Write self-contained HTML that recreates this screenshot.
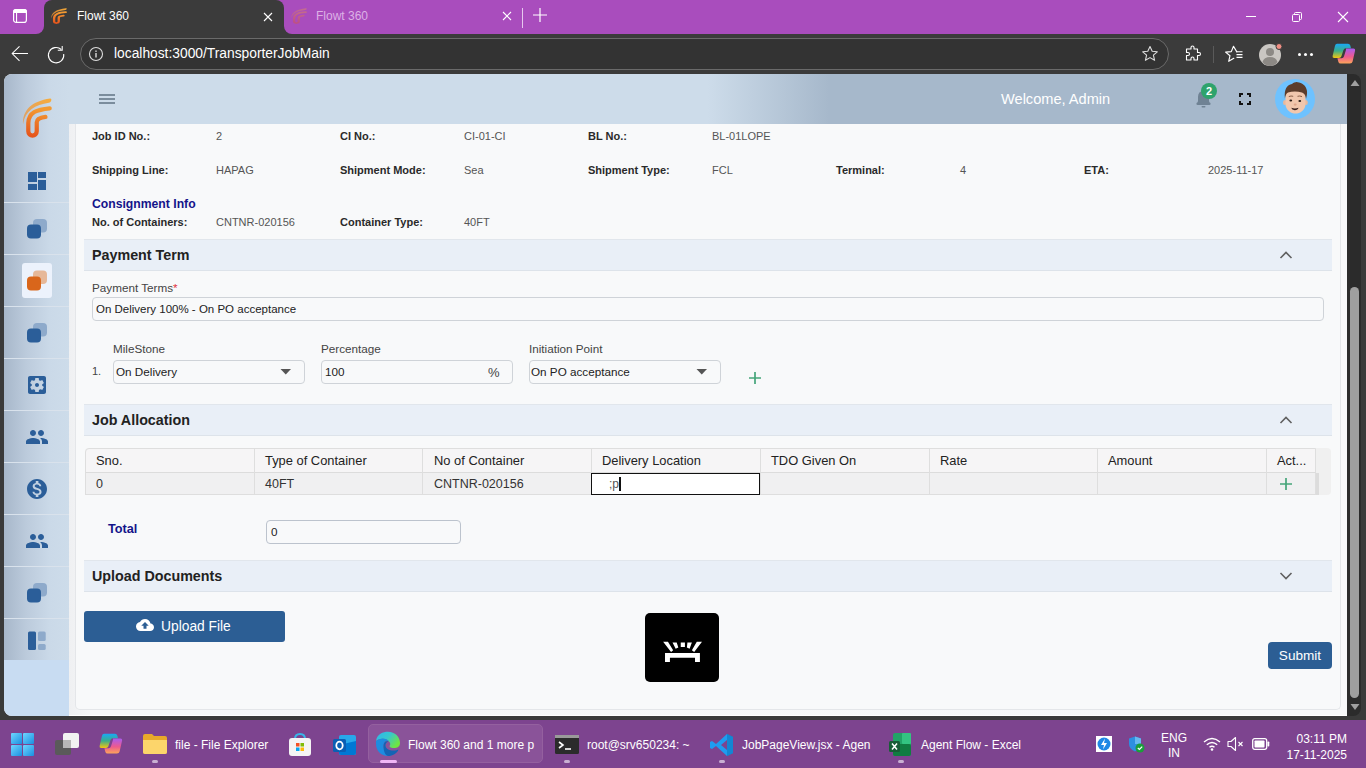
<!DOCTYPE html>
<html><head><meta charset="utf-8">
<style>
*{box-sizing:border-box;margin:0;padding:0}
html,body{width:1366px;height:768px;overflow:hidden;background:#3a3a3a;font-family:"Liberation Sans",sans-serif;position:relative}
.a{position:absolute}
#tabbar{left:0;top:0;width:1366px;height:34px;background:#a94dbd}
#nav{left:0;top:34px;width:1366px;height:40px;background:#3b3b3b}
#web{left:4px;top:74px;width:1343px;height:642px;background:#f8f9fa;border-radius:8px 0 0 8px;overflow:hidden}
#side{left:0;top:0;width:65px;height:586px;background:linear-gradient(90deg,#a7b7ca 0%,#bccbdc 35%,#cad9e8 70%,#cddcea 100%)}
#hdr{left:65px;top:0;width:1278px;height:50px;background:linear-gradient(90deg,#cddcea 0%,#cddcea 50%,#a6b8cb 59.5%,#a6b8cb 100%)}
#main{left:65px;top:50px;width:1278px;height:592px;background:linear-gradient(90deg,#eff0f2 0px,#f6f7f8 22px,#f7f8f9 100%);border-bottom:1px solid #fff}
.sep{left:4px;width:65px;height:1px;background:#d9e2ec}
#sb{left:1347px;top:74px;width:14px;height:642px;background:#2b2b2b;border-radius:0 8px 8px 0}
#task{left:0;top:720px;width:1366px;height:48px;background:#7d448f}
.tbt{font-size:12px;color:#fff;line-height:16px}
.lbl{font-size:11px;font-weight:bold;color:#2a2a2a;line-height:14px}
.val{font-size:11px;color:#555;line-height:14px}
.sech{left:84px;width:1248px;height:32px;background:#e9eff7;border-top:1px solid #e1e6ec;border-bottom:1px solid #dde3ea}
.sech span{position:absolute;left:8px;top:7px;font-size:14.3px;font-weight:bold;color:#222;line-height:16px}
.flbl{font-size:11.7px;color:#444;line-height:14px}
.inp{background:#f8f9fa;border:1px solid #cfd3d8;border-radius:4px}
.inp span{position:absolute;top:4px;font-size:11.7px;line-height:14px;color:#222;white-space:nowrap}
.vl{top:449px;width:1px;height:45px;background:#dedede}
.th{top:453px;font-size:12.9px;color:#222;line-height:15px}
.td{top:477px;font-size:12.5px;color:#333;line-height:15px}
</style></head><body>
<!-- TAB BAR -->
<div id="tabbar" class="a">
  <svg class="a" style="left:12px;top:8px" width="16" height="16" viewBox="0 0 16 16"><rect x="1.6" y="1.6" width="12.8" height="12.8" rx="2.5" fill="none" stroke="#fff" stroke-width="1.2"/><path d="M1 5 V3.5 Q1 1 3.5 1 H12.5 Q15 1 15 3.5 V5 Z" fill="#fff"/><rect x="4" y="4.5" width="1.1" height="10" fill="#fff"/></svg>
  <div class="a" style="left:44px;top:0;width:240px;height:34px;background:#3b3b3b;border-radius:8px 8px 0 0"></div>
  <div class="a" style="left:36px;top:26px;width:8px;height:8px;background:#3b3b3b"></div>
  <div class="a" style="left:36px;top:18px;width:8px;height:16px;background:#a94dbd;border-bottom-right-radius:8px"></div>
  <div class="a" style="left:284px;top:26px;width:8px;height:8px;background:#3b3b3b"></div>
  <div class="a" style="left:284px;top:18px;width:8px;height:16px;background:#a94dbd;border-bottom-left-radius:8px"></div>
  <svg class="a" style="left:51px;top:8px" width="16" height="16" viewBox="90 150 345 475" preserveAspectRatio="none"><defs><linearGradient id="fg11" x1="0" y1="1" x2="1" y2="0"><stop offset="0" stop-color="#f08a28" stop-opacity=".7"/><stop offset="1" stop-color="#f7ac3a"/></linearGradient><linearGradient id="fg21" x1="0.3" y1="0" x2="0.2" y2="1"><stop offset="0" stop-color="#f39a32"/><stop offset="1" stop-color="#e6561c"/></linearGradient></defs><path d="M95 465 C85 300 200 190 415 160 C440 158 432 205 400 210 C240 235 120 300 95 465 Z" fill="url(#fg11)"/><path d="M410 275 C260 290 160 320 157 450 L157 547 C157 580 180 597 207 597 C234 597 257 580 257 547 L257 440 C257 400 300 385 360 377" fill="none" stroke="url(#fg21)" stroke-width="50" stroke-linecap="round"/></svg>
  <div class="a" style="left:77px;top:8px;font-size:12px;color:#fff;line-height:16px">Flowt 360</div>
  <svg class="a" style="left:262px;top:11px" width="12" height="12" viewBox="0 0 12 12"><path d="M2 2 L10 10 M10 2 L2 10" stroke="#fff" stroke-width="1.1"/></svg>
  <svg class="a" style="left:291px;top:8px;opacity:.35" width="16" height="16" viewBox="90 150 345 475" preserveAspectRatio="none"><defs><linearGradient id="fg12" x1="0" y1="1" x2="1" y2="0"><stop offset="0" stop-color="#f08a28" stop-opacity=".7"/><stop offset="1" stop-color="#f7ac3a"/></linearGradient><linearGradient id="fg22" x1="0.3" y1="0" x2="0.2" y2="1"><stop offset="0" stop-color="#f39a32"/><stop offset="1" stop-color="#e6561c"/></linearGradient></defs><path d="M95 465 C85 300 200 190 415 160 C440 158 432 205 400 210 C240 235 120 300 95 465 Z" fill="url(#fg12)"/><path d="M410 275 C260 290 160 320 157 450 L157 547 C157 580 180 597 207 597 C234 597 257 580 257 547 L257 440 C257 400 300 385 360 377" fill="none" stroke="url(#fg22)" stroke-width="50" stroke-linecap="round"/></svg>
  <div class="a" style="left:316px;top:8px;font-size:12px;color:#dcb0e6;line-height:16px">Flowt 360</div>
  <svg class="a" style="left:501px;top:10px" width="12" height="12" viewBox="0 0 12 12"><path d="M2 2 L10 10 M10 2 L2 10" stroke="#fff" stroke-width="1.1"/></svg>
  <div class="a" style="left:522px;top:8px;width:1px;height:20px;background:#e6c8ee"></div>
  <svg class="a" style="left:532px;top:7px" width="16" height="16" viewBox="0 0 16 16"><path d="M8 1 V15 M1 8 H15" stroke="#fff" stroke-width="1.2"/></svg>
  <svg class="a" style="left:1244px;top:9px" width="14" height="14" viewBox="0 0 14 14"><path d="M2 7.5 H12" stroke="#fff" stroke-width="1"/></svg>
  <svg class="a" style="left:1290px;top:10px" width="14" height="14" viewBox="0 0 14 14"><rect x="2.5" y="4.5" width="7" height="7" rx="1" fill="none" stroke="#fff" stroke-width="1"/><path d="M4.5 4.5 V3.5 Q4.5 2.5 5.5 2.5 H10.5 Q11.5 2.5 11.5 3.5 V8.5 Q11.5 9.5 10.5 9.5 H9.5" fill="none" stroke="#fff" stroke-width="1"/></svg>
  <svg class="a" style="left:1336px;top:10px" width="14" height="14" viewBox="0 0 14 14"><path d="M2 2 L12 12 M12 2 L2 12" stroke="#fff" stroke-width="1.1"/></svg>
</div>
<!-- NAV BAR -->
<div id="nav" class="a">
  <svg class="a" style="left:10px;top:10px" width="20" height="20" viewBox="0 0 20 20"><path d="M18 9.5 H2.2 M9.5 2.3 L2.2 9.5 L9.5 16.8" fill="none" stroke="#fff" stroke-width="1.05"/></svg>
  <svg class="a" style="left:46px;top:10px" width="20" height="20" viewBox="0 0 20 20"><path d="M15.3 5.5 A7.7 7.7 0 1 0 17.7 10" fill="none" stroke="#fff" stroke-width="1.05"/><path d="M16.2 2 V6.3 H11.8" fill="none" stroke="#fff" stroke-width="1.05"/></svg>
  <div class="a" style="left:80px;top:4px;width:1089px;height:32px;border:1px solid #6a6a6a;border-radius:16px;background:#333"></div>
  <svg class="a" style="left:88px;top:12px" width="16" height="16" viewBox="0 0 16 16"><circle cx="8" cy="8" r="6.5" fill="none" stroke="#ddd" stroke-width="1.1"/><rect x="7.3" y="7" width="1.4" height="4.5" fill="#ddd"/><rect x="7.3" y="4.5" width="1.4" height="1.4" fill="#ddd"/></svg>
  <div class="a" style="left:114px;top:12px;font-size:13.8px;line-height:16px;color:#fff;white-space:nowrap">localhost<span style="color:#fff">:3000/TransporterJobMain</span></div>
  <svg class="a" style="left:1140px;top:10px" width="20" height="20" viewBox="0 0 20 20"><path d="M10 2.5 L12.2 7.3 L17.3 7.8 L13.4 11.2 L14.6 16.3 L10 13.6 L5.4 16.3 L6.6 11.2 L2.7 7.8 L7.8 7.3 Z" fill="none" stroke="#ddd" stroke-width="1.1" stroke-linejoin="round"/></svg>
  <svg class="a" style="left:1183px;top:10px" width="20" height="20" viewBox="0 0 20 20"><path d="M8 3.5 Q8 2 9.5 2 Q11 2 11 3.5 V5 H14.5 V8.5 H16 Q17.5 8.5 17.5 10 Q17.5 11.5 16 11.5 H14.5 V16 H11 V14.5 Q11 13 9.5 13 Q8 13 8 14.5 V16 H3.5 V11.5 H5 Q6.5 11.5 6.5 10 Q6.5 8.5 5 8.5 H3.5 V5 H8 Z" fill="none" stroke="#fff" stroke-width="1.1" stroke-linejoin="round"/></svg>
  <div class="a" style="left:1213px;top:12px;width:1px;height:17px;background:#5a5a5a"></div>
  <svg class="a" style="left:1224px;top:10px" width="22" height="20" viewBox="0 0 22 20"><path d="M12.8 7.9 L9.5 2.3 L7.3 7.6 L1.6 8.1 L6 11.7 L4.7 17.3 L9.8 14.3" fill="none" stroke="#fff" stroke-width="1.15" stroke-linejoin="round" stroke-linecap="round"/><path d="M12.5 7.7 H18.5 M12.5 10.6 H18.5 M12.5 13.3 H18.5" stroke="#fff" stroke-width="1.15"/></svg>
  <svg class="a" style="left:1258px;top:8px" width="26" height="26" viewBox="0 0 26 26"><circle cx="12" cy="13" r="11" fill="#c9c6c2"/><circle cx="12" cy="10" r="4" fill="#8c8985"/><path d="M4.5 20 Q6 15 12 15 Q18 15 19.5 20 Q16.5 24 12 24 Q7.5 24 4.5 20 Z" fill="#8c8985"/><circle cx="21" cy="4.5" r="3" fill="#f08f84" stroke="#3b3b3b" stroke-width="1"/></svg>
  <div class="a" style="left:1298px;top:19px;width:3px;height:3px;border-radius:50%;background:#fff;box-shadow:6px 0 0 #fff,12px 0 0 #fff"></div>
  <svg class="a" style="left:1332px;top:9px" width="24" height="22" viewBox="0 0 24 22"><defs><linearGradient id="cpa" x1="0" y1="0" x2="0" y2="1"><stop offset="0" stop-color="#1aa8f5"/><stop offset=".5" stop-color="#3aae8a"/><stop offset="1" stop-color="#f5c60e"/></linearGradient><linearGradient id="cpb" x1="0" y1="0" x2="0" y2="1"><stop offset="0" stop-color="#a85cf0"/><stop offset=".55" stop-color="#ee5a8e"/><stop offset="1" stop-color="#fca55a"/></linearGradient></defs><path d="M5 0.8 H16 Q17.8 0.8 18.3 2.5 L19 5.2 H14 Q12 5.2 11.4 7.2 L9.4 13.3 Q8.8 15 7 15 H2.2 Q0.2 15 0.6 13 L3 2.8 Q3.5 0.8 5 0.8 Z" fill="url(#cpa)"/><path d="M14 5.5 H21.5 Q23.5 5.5 23.1 7.5 L20.6 18.4 Q20.1 20.5 18 20.5 H8.5 Q6.9 20.5 6.4 19 L5.4 15.2 H9.5 Q11.5 15.2 12 13.3 L13.8 7.5 Q14.3 5.5 14 5.5 Z" fill="url(#cpb)"/></svg>
</div>
<div id="sb" class="a"></div>
<!-- WEB CONTENT -->
<div id="web" class="a">
  <div id="side" class="a"></div>
  <div class="a" style="left:0;top:586px;width:65px;height:56px;background:#c8dcf2"></div>
  <div id="hdr" class="a"></div>
  <div id="main" class="a"></div>
</div>
<!-- sidebar separators -->
<div class="a sep" style="top:202px"></div>
<div class="a sep" style="top:254px"></div>
<div class="a sep" style="top:306px"></div>
<div class="a sep" style="top:358px"></div>
<div class="a sep" style="top:410px"></div>
<div class="a sep" style="top:462px"></div>
<div class="a sep" style="top:514px"></div>
<div class="a sep" style="top:566px"></div>
<div class="a sep" style="top:618px"></div>
<!-- logo -->
<svg class="a" style="left:15px;top:85px" width="110" height="65" viewBox="0 0 1300 768">
  <defs>
    <linearGradient id="lg1" x1="0" y1="1" x2="1" y2="0"><stop offset="0" stop-color="#f08a28" stop-opacity=".6"/><stop offset="1" stop-color="#f7ac3a"/></linearGradient>
    <linearGradient id="lg2" x1="0.3" y1="0" x2="0.2" y2="1"><stop offset="0" stop-color="#f39a32"/><stop offset="1" stop-color="#e6561c"/></linearGradient>
  </defs>
  <path d="M95 465 C85 300 200 190 415 160 C440 158 432 205 400 210 C240 235 120 300 95 465 Z" fill="url(#lg1)"/>
  <path d="M410 275 C260 290 160 320 157 450 L157 547 C157 580 180 597 207 597 C234 597 257 580 257 547 L257 440 C257 400 300 385 360 377" fill="none" stroke="url(#lg2)" stroke-width="50" stroke-linecap="round"/>
</svg>
<!-- hamburger -->
<div class="a" style="left:99px;top:94px;width:16px;height:2px;background:#7b8d9d"></div>
<div class="a" style="left:99px;top:98px;width:16px;height:2px;background:#7b8d9d"></div>
<div class="a" style="left:99px;top:102px;width:16px;height:2px;background:#7b8d9d"></div>
<!-- header right -->
<div class="a" style="left:1001px;top:91px;font-size:14.6px;line-height:17px;color:#fff">Welcome, Admin</div>
<svg class="a" style="left:1194px;top:88px" width="20" height="22" viewBox="0 0 20 22"><path d="M9.5 3 Q15 3 15 9 V13 Q15 14.5 16.5 15 Q17 16.8 15.5 17 H3.5 Q2 16.8 2.5 15 Q4 14.5 4 13 V9 Q4 3 9.5 3 Z" fill="#6f8294"/><rect x="7.5" y="18" width="4" height="1.5" rx=".7" fill="#6f8294"/></svg>
<div class="a" style="left:1201px;top:83px;width:16px;height:16px;border-radius:50%;background:#2ea36c;color:#fff;font-size:11px;font-weight:bold;line-height:16px;text-align:center">2</div>
<svg class="a" style="left:1239px;top:93px" width="12" height="12" viewBox="0 0 12 12"><path d="M1 4 V1 H4 M8 1 H11 V4 M11 8 V11 H8 M4 11 H1 V8" fill="none" stroke="#111" stroke-width="2"/></svg>
<svg class="a" style="left:1275px;top:79px" width="40" height="40" viewBox="0 0 40 40">
  <circle cx="20" cy="20" r="20" fill="#6ec2ff"/>
  <ellipse cx="9.8" cy="23.5" rx="1.8" ry="2.6" fill="#e9b89b"/><ellipse cx="31" cy="23.5" rx="1.8" ry="2.6" fill="#e9b89b"/>
  <path d="M10.5 17 C10.5 12 15 11.5 20.5 11.5 C26 11.5 30.5 12 30.5 17 L30.5 25 C30.5 31 25 34.6 20.5 34.6 C16 34.6 10.5 31 10.5 25 Z" fill="#f1c7ad"/>
  <path d="M9.9 19.5 C9 10 12 6 17 5 C19 3.5 21 2.8 22.5 3.2 C27 4 31 6 32 12 C32.3 15 31.5 18 31 20 C30.5 16 29.5 14.5 27 13.5 C22 12 17 12.2 13 13.5 C11.5 14.5 10.5 16 9.9 19.5 Z" fill="#5c3d2c"/>
  <path d="M13.8 17.6 Q16 16.6 18.2 17.3 M22.5 17.3 Q24.8 16.6 27 17.6" fill="none" stroke="#8a6048" stroke-width="1"/>
  <ellipse cx="15.8" cy="21.6" rx="1.4" ry="1" fill="#2a1c16"/><ellipse cx="24.8" cy="22" rx="1.4" ry="1" fill="#2a1c16"/>
  <ellipse cx="20.2" cy="25.6" rx="1.5" ry="1.1" fill="#dfa58a"/>
  <path d="M16.2 28.8 Q20 30.2 23.5 28.8 Q23 31.2 19.8 31.3 Q16.8 31.1 16.2 28.8 Z" fill="#3a2320"/>
</svg>
<!-- sidebar icons -->
<svg class="a" style="left:25px;top:169px" width="24" height="24" viewBox="0 0 24 24"><path d="M3 13h9V3H3v10zm0 8h9v-6H3v6zm10 0h8V11h-8v10zm0-18v6h8V3h-8z" fill="#2b5e99"/></svg>
<svg class="a" style="left:26px;top:218px" width="22" height="22" viewBox="0 0 22 22"><rect x="7" y="1" width="14" height="13.5" rx="4" fill="#8eaacb"/><rect x="1" y="6.5" width="14" height="14" rx="4" fill="#2b5e99" stroke="#c8d7e7" stroke-width="0"/></svg>
<div class="a" style="left:22px;top:263px;width:30px;height:35px;border-radius:3px;background:#ecf2fc"></div>
<svg class="a" style="left:26px;top:270px" width="22" height="22" viewBox="0 0 22 22"><rect x="7" y="0.5" width="14" height="13.5" rx="4" fill="#e6b899"/><rect x="1" y="6.5" width="14" height="14" rx="4" fill="#d9661b"/></svg>
<svg class="a" style="left:26px;top:322px" width="22" height="22" viewBox="0 0 22 22"><rect x="7" y="1" width="14" height="13.5" rx="4" fill="#8eaacb"/><rect x="1" y="6.5" width="14" height="14" rx="4" fill="#2b5e99"/></svg>
<svg class="a" style="left:25px;top:373px" width="24" height="24" viewBox="0 0 24 24"><path d="M12 10c-1.1 0-2 .9-2 2s.9 2 2 2 2-.9 2-2-.9-2-2-2zm7-7H5c-1.11 0-2 .9-2 2v14c0 1.1.89 2 2 2h14c1.11 0 2-.9 2-2V5c0-1.1-.89-2-2-2zm-1.75 9c0 .23-.02.46-.05.68l1.48 1.16c.13.11.17.3.08.45l-1.4 2.42c-.09.15-.27.21-.43.15l-1.74-.7c-.36.28-.76.51-1.18.69l-.26 1.85c-.03.17-.18.3-.35.3h-2.8c-.17 0-.32-.13-.35-.29l-.26-1.85c-.43-.18-.82-.41-1.18-.69l-1.74.7c-.16.06-.34 0-.43-.15l-1.4-2.42c-.09-.15-.05-.34.08-.45l1.48-1.16c-.03-.23-.05-.46-.05-.69 0-.23.02-.46.05-.68l-1.48-1.16c-.13-.11-.17-.3-.08-.45l1.4-2.42c.09-.15.27-.21.43-.15l1.74.7c.36-.28.76-.51 1.18-.69l.26-1.85c.03-.17.18-.3.35-.3h2.8c.17 0 .32.13.35.29l.26 1.85c.43.18.82.41 1.18.69l1.74-.7c.16-.06.34 0 .43.15l1.4 2.42c.09.15.05.34-.08.45l-1.48 1.16c.03.23.05.46.05.69z" fill="#2b5e99"/></svg>
<svg class="a" style="left:25px;top:425px" width="24" height="24" viewBox="0 0 24 24"><path d="M16 11c1.66 0 2.99-1.34 2.99-3S17.66 5 16 5c-1.66 0-3 1.34-3 3s1.34 3 3 3zm-8 0c1.66 0 2.99-1.34 2.99-3S9.66 5 8 5C6.34 5 5 6.34 5 8s1.34 3 3 3zm0 2c-2.33 0-7 1.17-7 3.5V19h14v-2.5c0-2.330-4.67-3.5-7-3.5zm8 0c-.29 0-.62.02-.97.05 1.16.84 1.97 1.97 1.97 3.450V19h6v-2.5c0-2.330-4.67-3.5-7-3.5z" fill="#2b5e99"/></svg>
<svg class="a" style="left:25px;top:477px" width="24" height="24" viewBox="0 0 24 24"><path d="M12 2C6.48 2 2 6.48 2 12s4.48 10 10 10 10-4.48 10-10S17.52 2 12 2zm1.41 16.09V20h-2.67v-1.93c-1.71-.36-3.16-1.46-3.27-3.4h1.96c.1 1.05.82 1.87 2.65 1.87 1.96 0 2.4-.98 2.4-1.59 0-.83-.44-1.61-2.67-2.14-2.48-.6-4.18-1.62-4.18-3.67 0-1.72 1.39-2.84 3.11-3.21V4h2.67v1.95c1.86.45 2.79 1.86 2.85 3.39H14.3c-.05-1.11-.64-1.87-2.22-1.87-1.5 0-2.4.68-2.4 1.64 0 .84.65 1.39 2.67 1.91 2.02.52 4.18 1.39 4.18 3.91-.01 1.83-1.38 2.83-3.12 3.16z" fill="#2b5e99"/></svg>
<svg class="a" style="left:25px;top:529px" width="24" height="24" viewBox="0 0 24 24"><path d="M16 11c1.66 0 2.99-1.34 2.99-3S17.66 5 16 5c-1.66 0-3 1.34-3 3s1.34 3 3 3zm-8 0c1.66 0 2.99-1.34 2.99-3S9.66 5 8 5C6.34 5 5 6.34 5 8s1.34 3 3 3zm0 2c-2.33 0-7 1.17-7 3.5V19h14v-2.5c0-2.330-4.67-3.5-7-3.5zm8 0c-.29 0-.62.02-.97.05 1.16.84 1.970 1.970 1.970 3.45V19h6v-2.5c0-2.33-4.67-3.5-7-3.5z" fill="#2b5e99"/></svg>
<svg class="a" style="left:26px;top:582px" width="22" height="22" viewBox="0 0 22 22"><rect x="7" y="1" width="14" height="13.5" rx="4" fill="#8eaacb"/><rect x="1" y="6.5" width="14" height="14" rx="4" fill="#2b5e99"/></svg>
<svg class="a" style="left:27px;top:631px" width="20" height="20" viewBox="0 0 20 20"><rect x="1" y="0.5" width="8" height="18.5" rx="1.5" fill="#2b5e99"/><rect x="11" y="0.5" width="7.7" height="9.5" rx="1.5" fill="#8eaacb"/><rect x="11" y="13" width="7.7" height="6" rx="1.5" fill="#8eaacb"/></svg>
<!-- CARD -->
<div class="a" style="left:75px;top:124px;width:1266px;height:586px;background:#f8f9fa;border:1px solid #e4e6e9;border-top:none;border-radius:0 0 5px 5px"></div>
<!-- info rows -->
<div class="a lbl" style="left:92px;top:129px">Job ID No.:</div><div class="a val" style="left:216px;top:129px">2</div>
<div class="a lbl" style="left:340px;top:129px">CI No.:</div><div class="a val" style="left:464px;top:129px">CI-01-CI</div>
<div class="a lbl" style="left:588px;top:129px">BL No.:</div><div class="a val" style="left:712px;top:129px">BL-01LOPE</div>
<div class="a lbl" style="left:92px;top:163px">Shipping Line:</div><div class="a val" style="left:216px;top:163px">HAPAG</div>
<div class="a lbl" style="left:340px;top:163px">Shipment Mode:</div><div class="a val" style="left:464px;top:163px">Sea</div>
<div class="a lbl" style="left:588px;top:163px">Shipment Type:</div><div class="a val" style="left:712px;top:163px">FCL</div>
<div class="a lbl" style="left:836px;top:163px">Terminal:</div><div class="a val" style="left:960px;top:163px">4</div>
<div class="a lbl" style="left:1084px;top:163px">ETA:</div><div class="a val" style="left:1208px;top:163px">2025-11-17</div>
<div class="a" style="left:92px;top:197px;font-size:12.2px;font-weight:bold;color:#14148a;line-height:14px">Consignment Info</div>
<div class="a lbl" style="left:92px;top:215px">No. of Containers:</div><div class="a val" style="left:216px;top:215px">CNTNR-020156</div>
<div class="a lbl" style="left:340px;top:215px">Container Type:</div><div class="a val" style="left:464px;top:215px">40FT</div>
<!-- Payment Term -->
<div class="a sech" style="top:239px"><span>Payment Term</span></div>
<svg class="a" style="left:1279px;top:249px" width="14" height="12" viewBox="0 0 14 12"><path d="M1.5 9 L7 3.5 L12.5 9" fill="none" stroke="#606060" stroke-width="1.6"/></svg>
<div class="a flbl" style="left:92px;top:281px">Payment Terms<span style="color:#e0303a">*</span></div>
<div class="a inp" style="left:92px;top:297px;width:1232px;height:24px"><span style="left:3px;font-size:11.5px">On Delivery 100% - On PO acceptance</span></div>
<div class="a flbl" style="left:92px;top:364px;font-size:11px">1.</div>
<div class="a flbl" style="left:113px;top:342px">MileStone</div>
<div class="a inp" style="left:113px;top:360px;width:192px;height:24px"><span style="left:2px;color:#222">On Delivery</span></div>
<svg class="a" style="left:280px;top:368px" width="12" height="8" viewBox="0 0 12 8"><path d="M0.5 1 H11 L5.75 6.5 Z" fill="#555"/></svg>
<div class="a flbl" style="left:321px;top:342px">Percentage</div>
<div class="a inp" style="left:321px;top:360px;width:192px;height:24px"><span style="left:3px;color:#222">100</span><span style="left:166px;color:#444;font-size:13px;top:5px">%</span></div>
<div class="a flbl" style="left:529px;top:342px">Initiation Point</div>
<div class="a inp" style="left:529px;top:360px;width:192px;height:24px"><span style="left:1px;color:#222">On PO acceptance</span></div>
<svg class="a" style="left:696px;top:368px" width="12" height="8" viewBox="0 0 12 8"><path d="M0.5 1 H11 L5.75 6.5 Z" fill="#555"/></svg>
<svg class="a" style="left:748px;top:371px" width="14" height="14" viewBox="0 0 14 14"><path d="M7 1 V13 M1 7 H13" stroke="#45a57a" stroke-width="1.7"/></svg>
<!-- Job Allocation -->
<div class="a sech" style="top:404px"><span>Job Allocation</span></div>
<svg class="a" style="left:1279px;top:414px" width="14" height="12" viewBox="0 0 14 12"><path d="M1.5 9 L7 3.5 L12.5 9" fill="none" stroke="#606060" stroke-width="1.6"/></svg>
<!-- table -->
<div class="a" style="left:85px;top:448px;width:1246px;height:47px;background:#f0f0f0;border-radius:4px"></div>
<div class="a" style="left:85px;top:448px;width:1231px;height:25px;background:#f6f5f6;border:1px solid #dedede;border-radius:4px 0 0 0"></div>
<div class="a" style="left:85px;top:472px;width:1231px;height:23px;background:#f0f0f1;border:1px solid #dedede;border-top:1px solid #dcdcdc"></div>
<div class="a" style="left:1316px;top:473px;width:3px;height:22px;background:#dcdcdc"></div>
<div class="a vl" style="left:254px"></div>
<div class="a vl" style="left:422px"></div>
<div class="a vl" style="left:591px"></div>
<div class="a vl" style="left:760px"></div>
<div class="a vl" style="left:929px"></div>
<div class="a vl" style="left:1097px"></div>
<div class="a vl" style="left:1266px"></div>
<div class="a th" style="left:96px">Sno.</div>
<div class="a th" style="left:265px">Type of Container</div>
<div class="a th" style="left:434px">No of Container</div>
<div class="a th" style="left:602px">Delivery Location</div>
<div class="a th" style="left:771px">TDO Given On</div>
<div class="a th" style="left:940px">Rate</div>
<div class="a th" style="left:1108px">Amount</div>
<div class="a th" style="left:1277px">Act...</div>
<div class="a td" style="left:96px">0</div>
<div class="a td" style="left:265px">40FT</div>
<div class="a td" style="left:434px">CNTNR-020156</div>
<div class="a" style="left:591px;top:473px;width:169px;height:22px;background:#fff;border:1.5px solid #111"></div>
<div class="a" style="left:609px;top:477px;font-size:12px;line-height:14px;color:#555">;p</div>
<div class="a" style="left:619px;top:477px;width:1.5px;height:14px;background:#111"></div>
<svg class="a" style="left:1279px;top:477px" width="14" height="14" viewBox="0 0 14 14"><path d="M7 1 V13 M1 7 H13" stroke="#45a57a" stroke-width="1.7"/></svg>
<!-- total -->
<div class="a" style="left:108px;top:522px;font-size:12.7px;font-weight:bold;color:#14148a;line-height:15px">Total</div>
<div class="a inp" style="left:266px;top:520px;width:195px;height:24px;border-color:#bcc3cd"><span style="left:4px;top:4px;color:#222">0</span></div>
<!-- Upload Documents -->
<div class="a sech" style="top:560px"><span>Upload Documents</span></div>
<svg class="a" style="left:1279px;top:570px" width="14" height="12" viewBox="0 0 14 12"><path d="M1.5 3 L7 8.5 L12.5 3" fill="none" stroke="#606060" stroke-width="1.6"/></svg>
<div class="a" style="left:84px;top:611px;width:201px;height:31px;background:#2c5e94;border-radius:3px"></div>
<svg class="a" style="left:136px;top:618px" width="18" height="14" viewBox="0 0 24 18"><path d="M19.35 7.04C18.67 3.59 15.64 1 12 1 9.11 1 6.6 2.64 5.35 5.04 2.34 5.36 0 7.91 0 11c0 3.310 2.69 6 6 6h13c2.760 0 5-2.24 5-5 0-2.64-2.05-4.78-4.65-4.96zM14 10v4h-4v-4H7l5-5 5 5h-3z" fill="#fff"/></svg>
<div class="a" style="left:161px;top:619px;font-size:13.8px;line-height:16px;color:#fff">Upload File</div>
<div class="a" style="left:645px;top:613px;width:74px;height:69px;background:#000;border-radius:5px"></div>
<svg class="a" style="left:640px;top:608px" width="84" height="80" viewBox="0 0 806 768"><path d="M240 432 H575 V518 H528 V478 H287 V518 H240 Z" fill="#fff"/><path d="M222 325 H268 L318 405 L298 422 Z M312 330 H352 L368 380 L342 390 Z M391 330 H431 V375 H391 Z M455 330 H498 L476 390 L450 380 Z M545 325 H595 L520 422 L498 405 Z" fill="#fff"/></svg>
<div class="a" style="left:1268px;top:642px;width:64px;height:27px;background:#2c5e94;border-radius:4px;color:#fff;font-size:13.6px;line-height:27px;text-align:center">Submit</div>
<!-- scrollbar -->
<div class="a" style="left:1350px;top:287px;width:9px;height:411px;border-radius:5px;background:#9f9f9f"></div>
<svg class="a" style="left:1350px;top:79px" width="10" height="8" viewBox="0 0 10 8"><path d="M0.5 7 L5 1 L9.5 7 Z" fill="#9f9f9f"/></svg>
<svg class="a" style="left:1350px;top:703px" width="10" height="8" viewBox="0 0 10 8"><path d="M0.5 1 L5 7 L9.5 1 Z" fill="#9f9f9f"/></svg>
<!-- TASKBAR -->
<div id="task" class="a">
  <!-- windows logo -->
  <svg class="a" style="left:11px;top:13px" width="23" height="23" viewBox="0 0 23 23"><defs><linearGradient id="wg" x1="0" y1="0" x2="1" y2="1"><stop offset="0" stop-color="#6fd6ff"/><stop offset="1" stop-color="#1a8fe0"/></linearGradient></defs><rect x="0" y="0" width="11" height="11" rx="1" fill="url(#wg)"/><rect x="12" y="0" width="11" height="11" rx="1" fill="url(#wg)"/><rect x="0" y="12" width="11" height="11" rx="1" fill="url(#wg)"/><rect x="12" y="12" width="11" height="11" rx="1" fill="url(#wg)"/></svg>
  <!-- task view -->
  <svg class="a" style="left:55px;top:13px" width="25" height="23" viewBox="0 0 25 23"><rect x="0" y="7" width="16" height="15" rx="2" fill="#5a5a5a"/><rect x="8" y="0" width="16" height="15" rx="2" fill="#f2f2f2"/><rect x="8" y="7" width="8" height="8" fill="#b8b8b8"/></svg>
  <!-- copilot -->
  <svg class="a" style="left:99px;top:13px" width="24" height="22" viewBox="0 0 24 22"><defs><linearGradient id="tca" x1="0" y1="0" x2="0" y2="1"><stop offset="0" stop-color="#1aa8f5"/><stop offset=".5" stop-color="#3aae8a"/><stop offset="1" stop-color="#f5c60e"/></linearGradient><linearGradient id="tcb" x1="0" y1="0" x2="0" y2="1"><stop offset="0" stop-color="#a85cf0"/><stop offset=".55" stop-color="#ee5a8e"/><stop offset="1" stop-color="#fca55a"/></linearGradient></defs><path d="M5 0.8 H16 Q17.8 0.8 18.3 2.5 L19 5.2 H14 Q12 5.2 11.4 7.2 L9.4 13.3 Q8.8 15 7 15 H2.2 Q0.2 15 0.6 13 L3 2.8 Q3.5 0.8 5 0.8 Z" fill="url(#tca)"/><path d="M14 5.5 H21.5 Q23.5 5.5 23.1 7.5 L20.6 18.4 Q20.1 20.5 18 20.5 H8.5 Q6.9 20.5 6.4 19 L5.4 15.2 H9.5 Q11.5 15.2 12 13.3 L13.8 7.5 Q14.3 5.5 14 5.5 Z" fill="url(#tcb)"/></svg>
  <!-- file explorer -->
  <svg class="a" style="left:143px;top:14px" width="24" height="20" viewBox="0 0 24 20"><path d="M0 2 Q0 0 2 0 H9 L11 2 H22 Q24 2 24 4 V18 Q24 20 22 20 H2 Q0 20 0 18 Z" fill="#e8a92a"/><path d="M0 6 H24 V18 Q24 20 22 20 H2 Q0 20 0 18 Z" fill="#fcd56b"/></svg>
  <div class="a tbt" style="left:175px;top:17px">file - File Explorer</div>
  <div class="a" style="left:152px;top:40px;width:6px;height:3px;border-radius:2px;background:#c9b0d2"></div>
  <!-- store -->
  <svg class="a" style="left:288px;top:13px" width="24" height="24" viewBox="0 0 24 24"><path d="M7 6 Q7 1 12 1 Q17 1 17 6" fill="none" stroke="#38b6e8" stroke-width="2"/><rect x="1" y="5" width="22" height="18" rx="3" fill="#f4f4f4"/><rect x="8" y="10" width="3.5" height="3.5" fill="#f35325"/><rect x="12.5" y="10" width="3.5" height="3.5" fill="#81bc06"/><rect x="8" y="14.5" width="3.5" height="3.5" fill="#05a6f0"/><rect x="12.5" y="14.5" width="3.5" height="3.5" fill="#ffba08"/></svg>
  <!-- outlook -->
  <svg class="a" style="left:332px;top:13px" width="25" height="24" viewBox="0 0 25 24"><rect x="7" y="2" width="17" height="20" rx="2" fill="#28a8ea"/><path d="M7 12 L24 8 V20 Q24 22 22 22 H9 Q7 22 7 20 Z" fill="#0078d4"/><rect x="1" y="6" width="13" height="13" rx="1.5" fill="#0a5fb4"/><ellipse cx="7.5" cy="12.5" rx="3.2" ry="3.8" fill="none" stroke="#fff" stroke-width="1.8"/></svg>
  <!-- edge active -->
  <div class="a" style="left:368px;top:4px;width:175px;height:39px;border-radius:5px;background:#8a5399;border:1px solid #94609f"></div>
  <svg class="a" style="left:372px;top:8px" width="32" height="32" viewBox="0 0 32 32"><defs><linearGradient id="eg1" x1="0" y1="0" x2="1" y2=".6"><stop offset="0" stop-color="#2fb6ec"/><stop offset=".5" stop-color="#37c6cf"/><stop offset="1" stop-color="#6fe640"/></linearGradient></defs><path d="M4 13 C5 6 11 3.8 16 3.8 C23 3.8 28 9 28 15 C28 19 25 20 22 20 C19.5 20 17.5 19.5 17.5 18 C18.5 17 18.5 15 17.5 14 C15 10 8 9.5 4 13 Z" fill="url(#eg1)"/><path d="M4 13 C8 9.5 14 9.5 17 13 C14 12 11.5 14 11.5 18 C11.5 23 15 27 20 27.5 C18 28 17 28 16 28 C9 28 4 22.5 4 16 Z" fill="#1d8ce0"/><path d="M11.5 18 C11.5 14 14 12.5 16.5 13.5 C13.5 14.5 13 17 14 19.5 C15.5 22 19 22.5 21.5 22.5 C23.5 22.5 25.5 22 26.5 21.5 C25 25.5 20.5 28 16 28 C13 27 11.5 23 11.5 18 Z" fill="#1464b4"/></svg>
  <div class="a tbt" style="left:408px;top:17px;width:128px;overflow:hidden;white-space:nowrap">Flowt 360 and 1 more p</div>
  <div class="a" style="left:380px;top:40px;width:17px;height:3px;border-radius:2px;background:#f0b6f6"></div>
  <!-- terminal -->
  <svg class="a" style="left:555px;top:15px" width="24" height="19" viewBox="0 0 24 19"><rect x="0" y="0" width="24" height="19" rx="1.5" fill="#2b2b2b"/><rect x="0" y="0" width="24" height="3" fill="#9a9a9a"/><path d="M4 7 L8 10 L4 13" fill="none" stroke="#fff" stroke-width="1.6"/><path d="M10 14 H16" stroke="#fff" stroke-width="1.6"/></svg>
  <div class="a tbt" style="left:587px;top:17px">root@srv650234: ~</div>
  <div class="a" style="left:564px;top:40px;width:6px;height:3px;border-radius:2px;background:#c9b0d2"></div>
  <!-- vscode -->
  <svg class="a" style="left:710px;top:13px" width="24" height="24" viewBox="0 0 24 24"><path d="M17 1 L23 4 V20 L17 23 L6 13 L2 16 L0 15 V9 L2 8 L6 11 Z M17 7 L11 12 L17 17 Z" fill="#1f9cf0"/><path d="M17 1 L23 4 V20 L17 23 Z" fill="#0065a9"/><path d="M17 1 L23 4 V20 L17 23 V17 L17 7 Z" fill="#1f9cf0" opacity=".6"/></svg>
  <div class="a tbt" style="left:742px;top:17px">JobPageView.jsx - Agen</div>
  <div class="a" style="left:719px;top:40px;width:6px;height:3px;border-radius:2px;background:#c9b0d2"></div>
  <!-- excel -->
  <svg class="a" style="left:889px;top:13px" width="22" height="23" viewBox="0 0 22 23"><rect x="4" y="0" width="18" height="23" rx="2" fill="#21a366"/><rect x="13" y="0" width="9" height="11" rx="1" fill="#33c481"/><rect x="4" y="11" width="18" height="12" rx="2" fill="#107c41"/><rect x="0" y="8" width="11" height="11" rx="1.5" fill="#185c37"/><path d="M3 10.5 L8 16.5 M8 10.5 L3 16.5" stroke="#fff" stroke-width="1.5"/></svg>
  <div class="a tbt" style="left:921px;top:17px">Agent Flow - Excel</div>
  <div class="a" style="left:898px;top:40px;width:6px;height:3px;border-radius:2px;background:#c9b0d2"></div>
  <!-- tray -->
  <svg class="a" style="left:1096px;top:16px" width="16" height="16" viewBox="0 0 16 16"><rect width="16" height="16" fill="#fff"/><circle cx="8" cy="8" r="6.5" fill="#1f88e5"/><path d="M9 2.5 L5 9 H8 L7 13.5 L11 7 H8 Z" fill="#fff"/></svg>
  <svg class="a" style="left:1128px;top:16px" width="17" height="17" viewBox="0 0 17 17"><path d="M7 0.5 L13 2.5 V8 Q13 13 7 15.5 Q1 13 1 8 V2.5 Z" fill="#2d8fe0"/><path d="M7 0.5 L13 2.5 V8 L7 8 Z" fill="#66b8f0"/><circle cx="12" cy="12" r="4.5" fill="#1a9f3a"/><path d="M9.8 12 L11.4 13.5 L14.2 10.6" fill="none" stroke="#fff" stroke-width="1.2"/></svg>
  <div class="a" style="left:1154px;top:11px;width:40px;text-align:center;font-size:12px;line-height:15px;color:#fff">ENG<br>IN</div>
  <svg class="a" style="left:1203px;top:17px" width="18" height="14" viewBox="0 0 18 14"><path d="M1 5 Q9 -2 17 5" fill="none" stroke="#fff" stroke-width="1.4"/><path d="M3.8 7.8 Q9 3 14.2 7.8" fill="none" stroke="#fff" stroke-width="1.4"/><path d="M6.5 10.3 Q9 8 11.5 10.3" fill="none" stroke="#fff" stroke-width="1.4"/><circle cx="9" cy="12.5" r="1.3" fill="#fff"/></svg>
  <svg class="a" style="left:1227px;top:16px" width="18" height="16" viewBox="0 0 18 16"><path d="M1 5.5 H4 L8.5 1.5 V14.5 L4 10.5 H1 Z" fill="none" stroke="#fff" stroke-width="1.1" stroke-linejoin="round"/><path d="M11.5 6 L15.5 10 M15.5 6 L11.5 10" stroke="#fff" stroke-width="1.1"/></svg>
  <svg class="a" style="left:1252px;top:18px" width="18" height="12" viewBox="0 0 18 12"><rect x="0.7" y="0.7" width="14" height="10.6" rx="2" fill="none" stroke="#fff" stroke-width="1.3"/><rect x="2.5" y="2.5" width="10" height="7" rx="0.8" fill="#fff"/><rect x="15.5" y="3.5" width="1.8" height="5" rx=".8" fill="#fff"/></svg>
  <div class="a" style="left:1280px;top:11px;width:67px;text-align:right;font-size:12px;line-height:16px;color:#fff">03:11 PM<br>17-11-2025</div>
</div>
</body></html>
